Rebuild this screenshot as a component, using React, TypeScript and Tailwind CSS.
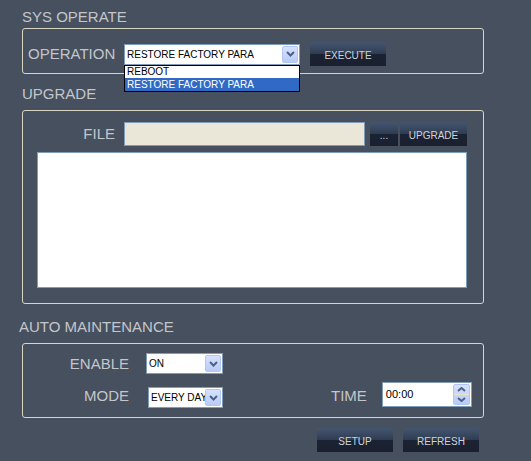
import React from 'react';

const font = "font-['Liberation_Sans',Arial,sans-serif]";

// dark gradient button used for EXECUTE / UPGRADE / SETUP ...
const DarkButton: React.FC<{ label: string; className?: string }> = ({ label, className }) => (
  <button
    className={`h-[24px] pt-[2px] bg-[linear-gradient(#44566f,#2f3d53_48%,#1b2231_52%,#1a2030)] text-[10px] text-[#cfd4dc] ${font} ${className ?? ''}`}
  >
    {label}
  </button>
);

const ArrowBox: React.FC = () => (
  <div className="w-[16px] h-[17px] bg-[linear-gradient(#d6e2fd,#b9cbf6)] border border-[#b3c6f0] rounded-[2px] flex items-center justify-center">
    <svg width="9" height="6" viewBox="0 0 9 6">
      <path d="M1 1 L4.5 4.5 L8 1" stroke="#4d6188" strokeWidth="2" fill="none" />
    </svg>
  </div>
);

const Select: React.FC<{ value: string; className?: string }> = ({ value, className }) => (
  <div className={`h-[21px] bg-white border border-[#7f9db9] flex items-center pl-[2px] pr-[1px] ${className ?? ''}`}>
    <span className={`flex-1 overflow-hidden whitespace-nowrap text-[10px] text-black ${font}`}>{value}</span>
    <ArrowBox />
  </div>
);

const Label: React.FC<{ text: string; className?: string }> = ({ text, className }) => (
  <span className={`block text-[15px] leading-[14px] text-[#c3c6cb] ${font} ${className ?? ''}`}>{text}</span>
);

const App: React.FC = () => {
  return (
    <div className="w-[531px] h-[461px] bg-[#47505e] relative overflow-hidden">
      {/* SYS OPERATE */}
      <div className="pt-[10px] pl-[22px]">
        <Label text="SYS OPERATE" />
      </div>
      <div className="mt-[4px] ml-[22px] w-[462px] h-[46px] border border-[#d8d5c3] rounded-[3px] flex items-center pl-[5px] pt-[6px]">
        <Label text="OPERATION" className="w-[96px]" />
        <div className="relative">
          <Select value="RESTORE FACTORY PARA" className="w-[176px]" />
          <div className="absolute top-[21px] left-0 w-[176px] h-[27px] bg-white border border-black z-10">
            <div className={`h-[12px] leading-[12px] pl-[2px] text-[10px] text-black ${font}`}>REBOOT</div>
            <div className={`h-[13px] leading-[13px] pl-[2px] text-[10px] text-white bg-[#316ac5] ${font}`}>RESTORE FACTORY PARA</div>
          </div>
        </div>
        <DarkButton label="EXECUTE" className="w-[76px] h-[23px] ml-[10px]" />
      </div>

      {/* UPGRADE */}
      <div className="mt-[13px] pl-[22px]">
        <Label text="UPGRADE" />
      </div>
      <div className="mt-[9px] ml-[22px] w-[462px] h-[194px] border border-[#d8d5c3] rounded-[3px] pt-[11px]">
        <div className="flex items-center">
          <Label text="FILE" className="w-[92px] text-right" />
          <div className="ml-[9px] w-[241px] h-[24px] bg-[#ebe7d8] border border-[#7f9db9]" />
          <DarkButton label="..." className="w-[28px] ml-[5px]" />
          <DarkButton label="UPGRADE" className="w-[67px] ml-[2px]" />
        </div>
        <div className="mt-[6px] ml-[14px] w-[430px] h-[136px] bg-white border border-[#7f9db9]" />
      </div>

      {/* AUTO MAINTENANCE */}
      <div className="mt-[16px] pl-[19px]">
        <Label text="AUTO MAINTENANCE" />
      </div>
      <div className="mt-[9px] ml-[22px] w-[462px] h-[75px] border border-[#d8d5c3] rounded-[3px]">
        <div className="flex items-center pt-[9px] h-[30px]">
          <Label text="ENABLE" className="w-[106px] text-right" />
          <Select value="ON" className="w-[77px] ml-[17px]" />
        </div>
        <div className="flex items-start">
          <Label text="MODE" className="w-[106px] text-right mt-[15px]" />
          <Select value="EVERY DAY" className="w-[75px] ml-[19px] mt-[13px]" />
          <Label text="TIME" className="ml-[108px] mt-[15px]" />
          <div className="ml-[15px] mt-[8px] w-[90px] h-[25px] bg-white border border-[#7f9db9] flex items-center pl-[3px] pr-[1px]">
            <span className={`flex-1 text-[11px] text-black ${font}`}>00:00</span>
            <div className="w-[17px] h-[21px] flex flex-col bg-[linear-gradient(#d6e2fd,#b9cbf6)] rounded-[2px] border border-[#b3c6f0]">
              <div className="flex-1 flex items-center justify-center">
                <svg width="9" height="5" viewBox="0 0 9 5"><path d="M1 4 L4.5 1 L8 4" stroke="#4d6188" strokeWidth="2" fill="none" /></svg>
              </div>
              <div className="h-px bg-[#e8e4cf]" />
              <div className="flex-1 flex items-center justify-center">
                <svg width="9" height="5" viewBox="0 0 9 5"><path d="M1 1 L4.5 4 L8 1" stroke="#4d6188" strokeWidth="2" fill="none" /></svg>
              </div>
            </div>
          </div>
        </div>
      </div>

      {/* bottom buttons */}
      <div className="flex justify-end pr-[52px] mt-[10px] gap-[10px]">
        <DarkButton label="SETUP" className="w-[76px]" />
        <DarkButton label="REFRESH" className="w-[76px]" />
      </div>
    </div>
  );
};

export default App;
